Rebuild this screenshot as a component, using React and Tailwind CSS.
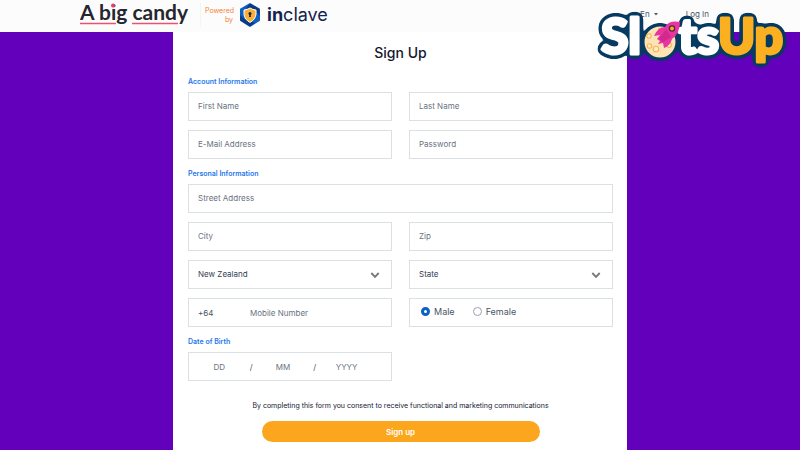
import React, { useState } from "react";

const box =
  "h-[29px] w-full min-w-0 border border-[#dbe0e2] bg-white px-[9px] pb-0.5 text-[8px] text-gray-700 outline-none placeholder:text-gray-500";

const Field = ({ label, type = "text" }) => (
  <input type={type} aria-label={label} placeholder={label} className={box} />
);

const SelectField = ({ label, options }) => (
  <div className="grid min-w-0 items-center">
    <select aria-label={label} className={`${box} col-start-1 row-start-1 appearance-none`}>
      {options.map((o) => (
        <option key={o}>{o}</option>
      ))}
    </select>
    <svg
      viewBox="0 0 10 8"
      className="pointer-events-none col-start-1 row-start-1 mr-3 h-2 w-2.5 justify-self-end"
    >
      <path d="M1.3 2 L5 5.8 L8.7 2" fill="none" stroke="#777b80" strokeWidth="1.9" />
    </svg>
  </div>
);

const SectionTitle = ({ children }) => (
  <h2 className="mb-1 text-[7px] leading-3 font-semibold text-[#2377ea]">{children}</h2>
);

const CandyLogo = () => (
  <svg viewBox="0 0 112 28" className="h-7 w-28" role="img" aria-label="A big candy">
    <text x="0" y="19" fontSize="21" fontWeight="700" fontFamily="Lato, sans-serif" fill="#26262e">
      A big candy
    </text>
    <circle cx="33" cy="4.6" r="2" fill="#ee3a63" />
    <path d="M0 22.5H36M52 22.5H98" stroke="#e8546f" strokeWidth="1.3" />
  </svg>
);

const InclaveLogo = () => (
  <div className="flex items-center gap-1.5">
    <svg viewBox="0 0 22 24" className="h-6 w-[22px]" aria-hidden="true">
      <path
        d="M11 1.2 L20 6.4 V17.2 L11 22.8 L2 17.2 V6.4 Z"
        fill="#0e5fc0"
        stroke="#0e5fc0"
        strokeWidth="2"
        strokeLinejoin="round"
      />
      <path d="M11 .4 L20.6 6 V13 Q18 7 7.5 5 Z" fill="#0a3a80" />
      <path d="M1.2 12 Q6 18 16 19.8 L11 23.4 L1.2 17.4 Z" fill="#0a3a80" />
      <path
        d="M11 5 Q14 7 17 7 V11 Q16.6 16.5 11 19.4 Q5.4 16.5 5 11 V7 Q8 7 11 5 Z"
        fill="#fbb034"
        stroke="#fff"
        strokeWidth="1"
      />
      <circle cx="11" cy="10.4" r="1.5" fill="#14234d" />
      <path d="M10.4 11 H11.6 L12 14 H10 Z" fill="#14234d" />
    </svg>
    <span className="text-[18px] leading-6 text-[#14234d]">
      <b>in</b>clave
    </span>
  </div>
);

const SlotsUpLogo = () => (
  <svg viewBox="0 -10 200 80" className="h-20 w-[200px]" role="img" aria-label="SlotsUp">
    <defs>
      {/* soft-cornered navy outline around every letter */}
      <filter id="outline" x="-10%" y="-20%" width="120%" height="140%" colorInterpolationFilters="sRGB">
        <feGaussianBlur in="SourceAlpha" stdDeviation="2.4" result="spread" />
        <feComponentTransfer in="spread" result="edge">
          <feFuncA type="linear" slope="20" intercept="-1" />
        </feComponentTransfer>
        <feFlood floodColor="#063a61" />
        <feComposite in2="edge" operator="in" result="navy" />
        <feMerge>
          <feMergeNode in="navy" />
          <feMergeNode in="SourceGraphic" />
        </feMerge>
      </filter>
    </defs>
    <g
      filter="url(#outline)"
      fontFamily="Lato, sans-serif"
      fontWeight="900"
      fontSize="50"
      fill="#fff"
      stroke="#fff"
      strokeWidth="3"
      strokeLinejoin="round"
    >
      <text x="4" y="44">Sl</text>
      <circle cx="63" cy="32" r="14" fill="#fde3b5" stroke="#fde3b5" />
      <text x="81" y="44">ts</text>
      <text x="121" y="44" fill="#fbb021" stroke="#fbb021">Up</text>
    </g>
    <g fill="#fdebc9" stroke="#f5b54e" strokeWidth="1.1">
      <circle cx="52" cy="26" r="2.2" />
      <circle cx="52.5" cy="36" r="2.2" />
      <circle cx="59" cy="39" r="2.8" />
      <circle cx="72" cy="35" r="2.4" />
      <circle cx="63" cy="20" r="1.6" />
    </g>
    <path
      d="M83 12 Q72 10 68 17 Q61 17 57 26 L63 25 L60 29 L63 31 L61 34 L66 33 L67 38 Q73 36 75 29 Q83 23 83 12 Z"
      fill="#e8359f"
    />
    <path d="M69 19 L62 29 L66 32 L74 27 Z" fill="#d02a8e" />
    <circle cx="75" cy="18.5" r="2.6" fill="#fbb021" stroke="#4b2a4c" strokeWidth="1.3" />
  </svg>
);

const App = () => {
  const [gender, setGender] = useState("Male");

  return (
    <div className="min-h-screen bg-[#6200bb] font-['Inter',sans-serif]">
      <header className="relative flex h-8 items-center bg-[#fcfcfc] pr-[91px] pb-0.5 pl-20">
        <CandyLogo />
        <div className="ml-2 flex items-center gap-1.5 border-l border-gray-100 pl-1">
          <p className="w-7 text-right text-[7px] leading-[9px] text-[#f5823a]">Powered by</p>
          <InclaveLogo />
        </div>
        <nav className="ml-auto flex items-center gap-7 pb-0.5 text-[8px] text-gray-600">
          <button type="button" className="flex items-center gap-1">
            En
            <svg viewBox="0 0 4 3" className="h-[3px] w-1">
              <path d="M0 0H4L2 2.5Z" fill="#555" />
            </svg>
          </button>
          <a href="#login">Log In</a>
        </nav>
        {/* Partner badge floats over the header and page edge */}
        <div className="pointer-events-none absolute top-0 right-[3px]">
          <SlotsUpLogo />
        </div>
      </header>

      <main className="mx-auto max-w-[454px] bg-white pt-[9px] pr-3.5 pb-2 pl-[15px]">
        <h1 className="text-center text-[14px] leading-6 font-medium text-[#14172f]">Sign Up</h1>

        <form className="mt-[11px] space-y-[9px]" onSubmit={(e) => e.preventDefault()}>
          <section>
            <SectionTitle>Account Information</SectionTitle>
            <div className="grid grid-cols-2 gap-x-[17px] gap-y-[9px]">
              <Field label="First Name" />
              <Field label="Last Name" />
              <Field label="E-Mail Address" type="email" />
              <Field label="Password" type="password" />
            </div>
          </section>

          <section>
            <SectionTitle>Personal Information</SectionTitle>
            <div className="grid grid-cols-2 gap-x-[17px] gap-y-[9px]">
              <div className="col-span-2 flex">
                <Field label="Street Address" />
              </div>
              <Field label="City" />
              <Field label="Zip" />
              <SelectField label="Country" options={["New Zealand"]} />
              <SelectField label="State" options={["State"]} />
              <div className="flex h-[29px] items-center border border-[#dbe0e2] px-[9px] text-[8px] text-gray-600">
                <span className="w-[52px]">+64</span>
                <input
                  type="tel"
                  aria-label="Mobile Number"
                  placeholder="Mobile Number"
                  className="min-w-0 flex-1 outline-none placeholder:text-gray-500"
                />
              </div>
              <div className="flex h-[29px] items-center gap-[18px] border border-[#dbe0e2] px-[11px] pb-0.5 text-[9px] text-gray-600">
                {["Male", "Female"].map((g) => (
                  <label key={g} className="flex items-center gap-1">
                    <input
                      type="radio"
                      name="gender"
                      checked={gender === g}
                      onChange={() => setGender(g)}
                      className="size-[9px] appearance-none rounded-full border border-gray-400 checked:border-3 checked:border-[#0a62c9]"
                    />
                    {g}
                  </label>
                ))}
              </div>
            </div>
          </section>

          <section>
            <SectionTitle>Date of Birth</SectionTitle>
            <div className="grid grid-cols-2 gap-x-[17px]">
              <div className="flex h-[29px] items-center border border-[#dbe0e2] pr-3.5 text-[8px] text-gray-600">
                <input
                  aria-label="Day"
                  placeholder="DD"
                  className="w-0 flex-1 text-center outline-none placeholder:text-gray-500"
                />
                <span>/</span>
                <input
                  aria-label="Month"
                  placeholder="MM"
                  className="w-0 flex-1 text-center outline-none placeholder:text-gray-500"
                />
                <span>/</span>
                <input
                  aria-label="Year"
                  placeholder="YYYY"
                  className="w-0 flex-1 text-center outline-none placeholder:text-gray-500"
                />
              </div>
            </div>
          </section>

          <div className="pt-2.5 text-center">
            <p className="text-[7px] leading-3 text-[#14172f]">
              By completing this form you consent to receive functional and marketing communications
            </p>
            <button
              type="submit"
              className="mt-[9px] h-[21px] w-[278px] rounded-full bg-[#fba61d] text-[8px] font-semibold text-white"
            >
              Sign up
            </button>
          </div>
        </form>
      </main>
    </div>
  );
};

export default App;
